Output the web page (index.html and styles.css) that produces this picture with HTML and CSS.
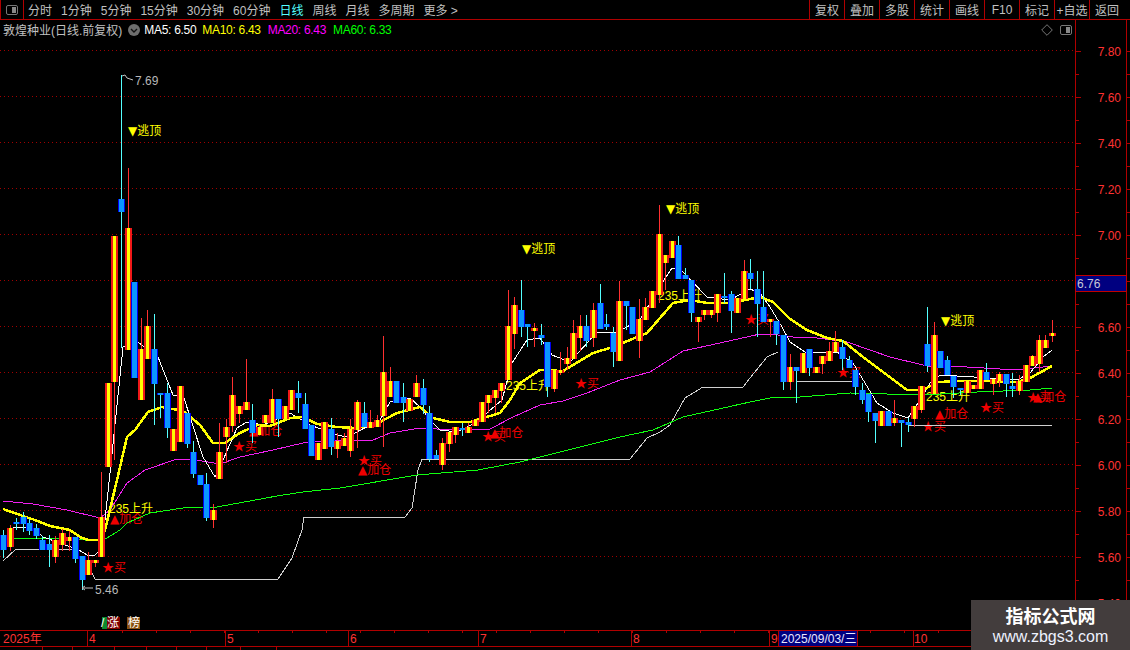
FILE: index.html
```html
<!DOCTYPE html>
<html lang="zh">
<head>
<meta charset="utf-8">
<title>敦煌种业</title>
<link rel="stylesheet" href="styles.css">
</head>
<body>
<div class="app">
  <header class="toolbar">
    <button class="panel-toggle"><span class="panel-icon"><i></i></span></button>
    <nav class="periods">
      <span>分时</span><span>1分钟</span><span>5分钟</span><span>15分钟</span><span>30分钟</span><span>60分钟</span>
      <span class="active">日线</span><span>周线</span><span>月线</span><span>多周期</span><span>更多 &gt;</span>
    </nav>
    <nav class="actions">
      <span>复权</span><span>叠加</span><span>多股</span><span>统计</span><span>画线</span><span>F10</span><span>标记</span><span>+自选</span><span>返回</span>
    </nav>
  </header>
  <div class="chart-row">
    <section class="plot">
      <div class="legend">
        <span class="stock">敦煌种业(日线.前复权)</span>
        <svg class="chevron" width="12" height="12" viewBox="0 0 12 12"><circle cx="6" cy="6" r="6" fill="#6e6e6e"/><path d="M3 5l3 3 3-3" fill="none" stroke="#111" stroke-width="1.4"/></svg>
        <span class="ma5">MA5: 6.50</span>
        <span class="ma10">MA10: 6.43</span>
        <span class="ma20">MA20: 6.43</span>
        <span class="ma60">MA60: 6.33</span>
        <span class="legend-tools">
          <svg width="12" height="12" viewBox="0 0 12 12"><path d="M6 .7L11.3 6 6 11.3.7 6z" fill="none" stroke="#777"/></svg>
          <span class="panel-icon flip"><i></i></span>
        </span>
      </div>
      <svg id="chart" class="canvas" width="1075" height="591" viewBox="0 39 1075 591">
        <g id="grid" class="grid"></g>
        <g class="sig-red">
          <text x="102" y="572">★买</text>
          <text x="233" y="451">★买</text>
          <text x="745" y="324">★买</text>
          <text x="575" y="388">★买</text>
          <text x="482" y="441">★买</text>
          <text x="837" y="377">★买</text>
          <text x="922" y="431">★买</text>
          <text x="980" y="412">★买</text>
          <text x="1027" y="402">★买</text>
          <text x="358" y="465">★买</text>
          <text x="110" y="523"><tspan class="sym">▲</tspan>加仓</text>
          <text x="249" y="435"><tspan class="sym">▲</tspan>加仓</text>
          <text x="358" y="474"><tspan class="sym">▲</tspan>加仓</text>
          <text x="490" y="437"><tspan class="sym">▲</tspan>加仓</text>
          <text x="935" y="418"><tspan class="sym">▲</tspan>加仓</text>
          <text x="1033" y="401"><tspan class="sym">▲</tspan>加仓</text>
        </g>
        <g class="sig-yellow">
          <text x="109" y="513">235上升</text>
          <text x="506" y="390">235上升</text>
          <text x="658" y="300">235上升</text>
          <text x="926" y="401">235上升</text>
          <text x="128" y="135"><tspan class="sym">▼</tspan>逃顶</text>
          <text x="522" y="253"><tspan class="sym">▼</tspan>逃顶</text>
          <text x="666" y="213"><tspan class="sym">▼</tspan>逃顶</text>
          <text x="941" y="325"><tspan class="sym">▼</tspan>逃顶</text>
        </g>
        <g id="lines"></g>
        <g id="candles"></g>
        <g class="extreme">
          <path d="M122 76l3-1 2 3 3 1 3 1M82 588h11M82 588l3-2M82 588l3 2" fill="none" stroke="#c0c0c0"/>
          <text x="135" y="85">7.69</text>
          <text x="95" y="594">5.46</text>
        </g>
        <g class="tags">
          <rect x="102" y="617" width="5" height="12" fill="#0a8a30"/>
          <rect x="107" y="617" width="13" height="12" fill="#800000"/>
          <rect x="127" y="617" width="13" height="12" fill="#8a5010"/>
          <text x="101" y="627">/</text>
          <text x="107" y="627">涨</text>
          <text x="128" y="627">榜</text>
        </g>
      </svg>
    </section>
    <aside class="axis">
      <svg id="axis" width="55" height="611" viewBox="1075 19 55 611">
        <g id="ticks"></g>
        <g class="axis-labels">
          <text x="1121" y="55">7.80</text>
          <text x="1121" y="101">7.60</text>
          <text x="1121" y="147">7.40</text>
          <text x="1121" y="193">7.20</text>
          <text x="1121" y="239">7.00</text>
          <text x="1121" y="331">6.60</text>
          <text x="1121" y="377">6.40</text>
          <text x="1121" y="423">6.20</text>
          <text x="1121" y="469">6.00</text>
          <text x="1121" y="515">5.80</text>
          <text x="1121" y="561">5.60</text>
          <text x="1121" y="607">5.40</text>
        </g>
        <rect x="1075.5" y="274.5" width="51" height="16" fill="#000080" stroke="#c00000"/>
        <text class="price-tag" x="1077" y="287">6.76</text>
      </svg>
    </aside>
  </div>
  <footer class="timeline">
    <svg id="time" width="1130" height="17" viewBox="0 630 1130 17">
      <g id="time-lines"></g>
      <rect x="779" y="631" width="78" height="15" fill="#000080"/>
      <g class="time-labels">
        <text x="3" y="643">2025年</text>
        <text x="89" y="643">4</text>
        <text x="227" y="643">5</text>
        <text x="350" y="643">6</text>
        <text x="480" y="643">7</text>
        <text x="633" y="643">8</text>
        <text x="771" y="643">9</text>
        <text x="914" y="643">10</text>
      </g>
      <text class="time-cursor" x="781" y="643">2025/09/03/三</text>
    </svg>
  </footer>
  <div class="subbar">
    <span class="w43"></span><span class="w30"></span><span class="w42"></span><span class="w32"></span><span class="w30"></span><span class="w30"></span><span class="w34"></span><span class="w36"></span>
  </div>
  <aside class="watermark">
    <strong>指标公式网</strong>
    <span>www.zbgs3.com</span>
  </aside>
</div>
<script src="chart.js"></script>
</body>
</html>
```
FILE: styles.css
```css
* { box-sizing: border-box; }
html, body { margin: 0; height: 100%; background: #000; overflow: hidden; }
body { font-family: "Liberation Sans", "Noto Sans CJK SC", sans-serif; font-size: 12px; color: #c0c0c0; }
svg { display: block; }
svg text { font-family: "Liberation Sans", "Noto Sans CJK SC", sans-serif; font-size: 12px; }
svg text .sym { font-family: "DejaVu Sans", sans-serif; }

.app { position: relative; display: flex; flex-direction: column; width: 1130px; height: 650px; }

.toolbar { flex: none; display: flex; align-items: stretch; height: 20px; border-bottom: 1px solid #b00000; }
.panel-toggle { width: 24px; padding: 0; background: none; border: 0; border-left: 1px solid #b00000; border-right: 1px solid #b00000; display: flex; align-items: center; justify-content: center; }
.panel-icon { display: flex; justify-content: flex-end; width: 12px; height: 10px; border: 1px solid #777; border-radius: 2px; padding: 1px; }
.panel-icon i { display: block; width: 4px; background: #888; }
.panel-toggle .panel-icon { justify-content: flex-start; flex-direction: row-reverse; }
.periods { display: flex; align-items: center; gap: 9px; padding-left: 4px; }
.periods .active { color: #54ffff; }
.actions { display: flex; margin-left: auto; padding-right: 6px; }
.actions span { width: 35px; display: flex; align-items: center; justify-content: center; border-left: 1px solid #b00000; white-space: nowrap; }

.chart-row { flex: none; height: 610px; display: flex; }
.plot { width: 1075px; display: flex; flex-direction: column; }
.legend { flex: none; display: flex; align-items: center; height: 19px; padding: 0 3px; gap: 6px; white-space: nowrap; }
.stock { color: #c0c0c0; }
.ma5, .ma10, .ma20, .ma60 { letter-spacing: -.3px; }
.ma5 { color: #fff; margin-left: -2px; }
.ma10 { color: #ff0; }
.ma20 { color: #f0f; margin-left: 1px; }
.ma60 { color: #0f0; margin-left: 1px; }
.legend-tools { margin-left: auto; display: flex; align-items: center; gap: 7px; }
.canvas { flex: none; }

.grid line { stroke: #a00000; stroke-dasharray: 1 3; }
#lines polyline { shape-rendering: crispEdges; }
.sig-red text { fill: #f00000; }
.sig-yellow text { fill: #ff0; }
.extreme text { fill: #b8b8b8; }
.tags text { fill: #fff; }
.axis { width: 55px; }
.axis-labels text { fill: #ff3232; text-anchor: end; }
.price-tag { fill: #c8c8d8; }
.time-labels text { fill: #ff3232; }
.time-cursor { fill: #e8e8ff; }

.timeline { flex: none; height: 17px; }
.subbar { flex: none; height: 3px; display: flex; overflow: hidden; }
.subbar span { border-right: 1px solid #b00000; height: 3px; }
.w43 { width: 43px; } .w30 { width: 30px; } .w42 { width: 42px; } .w32 { width: 32px; } .w34 { width: 34px; } .w36 { width: 36px; }

.watermark { position: absolute; right: 0; bottom: 0; width: 159px; height: 50px; background: #433d3d; display: flex; flex-direction: column; align-items: center; padding-top: 4px; color: #fff; }
.watermark strong { font-size: 18px; line-height: 23px; font-family: "Noto Sans CJK SC", sans-serif; }
.watermark span { font-size: 16px; line-height: 19px; color: #eef2ff; }
```
FILE: chart.js
```js
var NS = 'http://www.w3.org/2000/svg';
function add(parent, tag, attrs) {
  var el = document.createElementNS(NS, tag);
  for (var k in attrs) el.setAttribute(k, attrs[k]);
  parent.appendChild(el);
  return el;
}
function byId(id) { return document.getElementById(id); }

/* dotted price grid */
for (var p = 0; p < 12; p++) {
  var gy = 50.5 + p * 46;
  add(byId('grid'), 'line', { x1: 0, x2: 1075, y1: gy, y2: gy });
}

/* moving averages and the step line, page coordinates */
var series = [
  { c: '#d0d0d0', w: 1, d: ['3,561 16,549 72,549', '92,573 95,579 278,579 292,558 302,530 304,517 405,517 412,508 418,470 422,459 630,459 647,438 660,432 670,425 685,398 703,387 743,387 750,378 767,357 778,352', '797,381 852,381', '908,425 1052,425'] },
  { c: '#10ff10', w: 1, d: ['13,538 70,539 100,541 107,538 120,530 127,523 150,513 183,508 217,507 277,496 303,492 340,488 417,475 478,470 520,462 560,452 620,437 653,430 683,417 750,402 770,398 800,397 850,393 923,395 977,392 1030,390 1052,388'] },
  { c: '#f020f0', w: 1, d: ['3,501 33,504 67,510 100,518 110,510 127,483 145,470 177,459 190,459 220,464 240,457 273,450 303,443 330,440 373,440 390,433 420,428 453,430 490,429 513,417 540,405 563,401 587,393 620,380 650,372 683,351 720,343 760,334 770,334 793,337 817,338 847,342 890,357 927,366 967,367 1017,370 1052,366'] },
  { c: '#ffffff', w: 1, d: ['3,540 13,528 22,527 33,528 43,537 60,543 79,550 87,555 95,555 98,552 105,520 110,473 123,347 138,342 158,357 173,395 183,395 203,457 215,477 223,460 237,428 247,422 263,425 290,413 310,425 337,435 347,437 380,420 390,402 410,398 420,407 433,423 440,430 457,432 475,423 502,400 512,363 527,340 540,338 552,355 570,362 597,332 617,332 640,320 662,283 672,268 683,272 707,297 730,300 750,289 760,293 770,307 782,327 790,342 805,352 837,352 853,363 877,403 893,413 908,418 920,400 930,383 940,375 957,376 990,378 1017,380 1030,373 1043,357 1052,350'] },
  { c: '#ffff00', w: 2.5, d: ['3,509 20,515 35,520 50,526 70,530 80,537 88,540 100,540 105,530 117,480 127,437 135,430 148,412 162,407 183,411 200,425 213,443 225,443 240,433 257,425 270,426 290,418 303,417 317,424 337,427 357,428 380,422 397,413 420,407 433,418 450,422 470,422 500,413 510,400 520,383 540,370 563,371 593,353 610,348 630,340 647,333 660,318 673,303 690,300 707,303 730,303 760,297 773,302 790,319 807,330 827,338 843,341 863,357 883,372 907,390 923,390 938,382 963,381 983,381 1017,382 1030,378 1052,366'] }
];
series.forEach(function (s) {
  s.d.forEach(function (pts) {
    add(byId('lines'), 'polyline', { points: pts, fill: 'none', stroke: s.c, 'stroke-width': s.w });
  });
});

/* candles: colour, wick top, body top, body bottom, wick bottom, one per session */
var rows = 'b530 535 550 558,r525 528 547 551,b518 522 523 530,b512 517 524 532,b519 523 531 535,b524 528 536 539,b536 540 550 550,b535 544 550 567,r536 540 557 563,r529 533 545 551,r531 537 541 551,b537 537 559 563,b556 556 580 590,r552 560 575 575,r560 560 563 567,r472 517 557 557,r383 383 467 467,r236 236 382 460,b75 199 212 348,r168 228 350 350,b282 282 378 378,r318 349 400 400,r310 326 359 359,b314 349 384 425,b393 393 394 418,b383 393 428 438,r429 429 451 451,r386 386 442 442,b413 413 444 448,b441 452 474 478,b475 475 485 485,b473 484 518 521,r504 510 520 528,r423 452 479 479,r419 427 437 463,r377 395 426 432,r406 406 414 423,r359 402 410 410,b404 420 433 443,r425 427 435 435,r415 415 423 423,r389 399 423 423,b399 399 419 437,r406 406 419 419,r390 390 410 410,b381 393 398 413,b393 404 429 429,b425 425 456 456,r443 443 460 460,r422 422 449 449,b418 429 447 455,r433 441 449 458,r433 438 446 446,r419 429 451 457,r400 402 430 448,b402 413 427 427,r410 422 428 428,r415 420 427 427,r336 372 416 447,r367 381 397 397,b381 381 403 403,b383 397 403 422,r399 399 411 411,r375 383 397 397,b379 388 405 414,b406 413 459 462,b450 455 459 459,r438 443 465 470,r432 432 444 452,r427 427 435 443,b423 428 430 436,r423 427 433 433,r420 420 426 426,r402 402 422 422,r395 395 403 413,r390 390 398 413,r383 383 391 403,r290 326 380 380,r297 305 334 349,b280 310 327 337,b324 324 327 347,r323 328 331 347,b324 335 338 345,b342 342 387 397,r370 370 389 392,r352 370 373 375,r347 358 364 370,r320 333 359 359,r315 326 338 351,b315 326 341 347,r303 310 338 347,b284 303 329 329,b314 324 327 330,b327 333 352 367,r281 301 361 361,b301 301 306 330,b307 307 334 334,r299 319 341 358,r298 307 320 320,r291 291 308 308,r205 234 295 303,r255 255 263 290,r241 241 258 258,b236 245 279 279,b268 275 279 279,b280 280 313 322,r317 317 322 342,r310 310 315 320,r310 310 315 318,r294 294 313 322,b273 296 298 303,b291 294 311 333,r298 298 313 313,r260 271 299 299,b259 273 279 289,b271 289 304 337,b271 307 322 322,r319 319 322 337,b321 321 334 345,b335 335 382 390,r354 367 382 390,b367 367 371 403,r353 353 373 373,b349 349 368 376,r367 367 373 373,r356 356 364 374,r342 351 361 361,r331 342 352 352,b340 347 359 370,b356 360 368 368,b370 370 387 395,b383 390 400 404,b394 394 412 422,b413 413 421 443,r411 411 426 426,b411 411 426 426,r400 418 423 426,b420 420 423 447,b418 422 425 432,r406 406 419 427,r386 386 410 413,b307 344 366 372,r322 335 394 394,b351 351 368 368,b356 360 375 375,b376 376 387 398,b388 388 389 395,r381 381 393 393,r385 385 389 389,r370 370 389 389,b363 372 380 380,r379 379 384 395,r372 374 381 387,b374 374 384 397,b373 386 389 397,r375 381 391 395,r365 365 382 382,r355 356 366 366,r335 340 364 372,r335 340 348 348,r320 333 336 342'.split(',');
var g = byId('candles');
rows.forEach(function (row, i) {
  var up = row[0] === 'r';
  var v = row.slice(1).split(' ').map(Number);
  var cx = Math.round(3 + 6.555 * i);
  var h = Math.max(v[2] - v[1], 2);
  add(g, 'rect', { x: cx, y: v[0], width: 1, height: v[3] - v[0], fill: up ? '#ff3030' : '#54ffff' });
  if (up) {
    add(g, 'rect', { x: cx - 3, y: v[1], width: 7, height: h, fill: '#f01818' });
    add(g, 'rect', { x: cx - 1, y: v[1], width: 3, height: h, fill: '#ffff00' });
  } else {
    add(g, 'rect', { x: cx - 3, y: v[1], width: 7, height: h, fill: '#0000f0' });
    add(g, 'rect', { x: cx - 2, y: v[1], width: 5, height: h, fill: '#0a96ff' });
  }
});

/* price axis */
var t = byId('ticks');
add(t, 'rect', { x: 1075, y: 19, width: 1, height: 611, fill: '#b00000' });
add(t, 'rect', { x: 1126, y: 19, width: 1, height: 611, fill: '#b00000' });
for (var k = 0; k < 24; k++) {
  var y = Math.round(50 + k * 23);
  add(t, 'rect', { x: 1076, y: y, width: k % 2 ? 3 : 5, height: 1, fill: '#b00000' });
  add(t, 'rect', { x: 1127, y: y, width: 3, height: 1, fill: '#b00000' });
}

/* time axis */
var tl = byId('time-lines');
add(tl, 'rect', { x: 0, y: 630, width: 1130, height: 1, fill: '#b00000' });
add(tl, 'rect', { x: 0, y: 646, width: 1130, height: 1, fill: '#b00000' });
[87, 225, 348, 478, 631, 769, 778, 857, 913].forEach(function (x) {
  add(tl, 'rect', { x: x, y: 631, width: 1, height: 15, fill: '#b00000' });
});
for (var tx = 122; tx < 1130; tx += 34) {
  add(tl, 'rect', { x: tx, y: 631, width: 1, height: 2, fill: '#b00000' });
}
```
